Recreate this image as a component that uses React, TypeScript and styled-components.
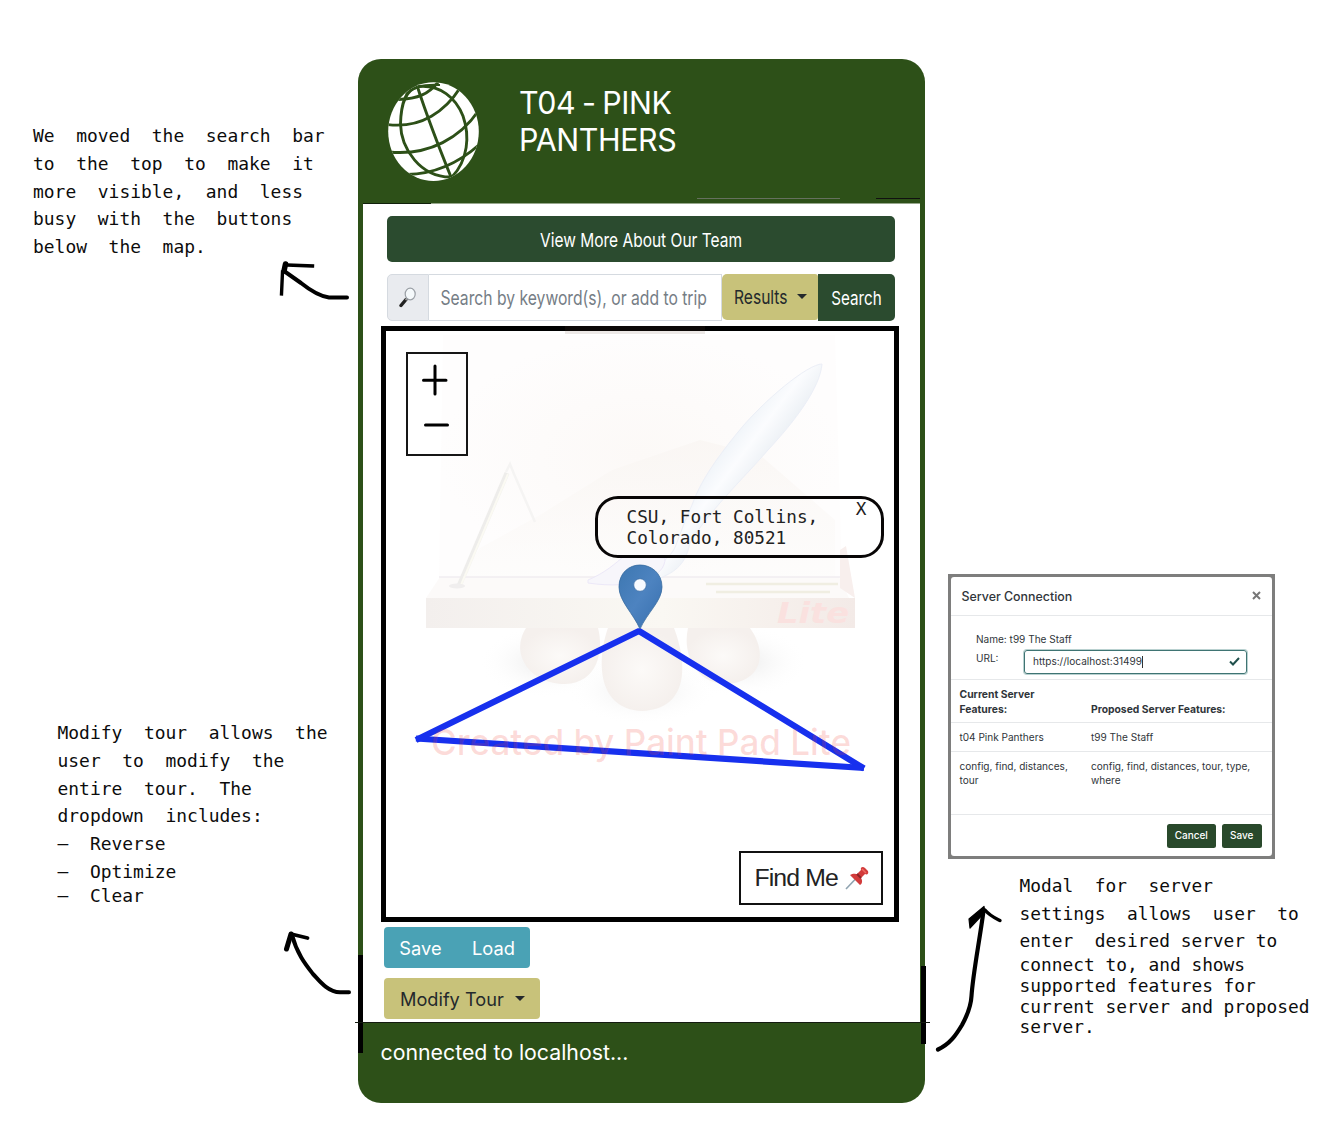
import React from "react";
import styled, { createGlobalStyle } from "styled-components";

const Global = createGlobalStyle`
  * { box-sizing: border-box; }
  body { margin: 0; background: #fff; font-family: Inter, "Liberation Sans", sans-serif; color: #212529; }
`;

const forest = "#2d5018";
const pine = "#2b4b2f";
const khaki = "#c8c27a";

const Page = styled.main`
  display: flex;
  align-items: flex-start;
  width: 1342px;
  height: 1140px;
  overflow: hidden;
`;

const Column = styled.section<{ $width: number; $top: number }>`
  flex: 0 0 ${(p) => p.$width}px;
  padding-top: ${(p) => p.$top}px;
`;

const Note = styled.div<{ $left: number; $top?: number; $size?: number }>`
  margin: ${(p) => p.$top ?? 0}px 0 0 ${(p) => p.$left}px;
  font-family: "DejaVu Sans Mono", monospace;
  font-size: ${(p) => p.$size ?? 17.95}px;
  color: #0c0c0c;
  white-space: pre;
`;

const Line = styled.div<{ $tight?: boolean }>`
  height: ${(p) => (p.$tight ? 20.8 : 27.7)}px;
  line-height: ${(p) => (p.$tight ? 20.8 : 27.7)}px;
`;

const Sketch = styled.svg<{ $left: number; $top: number }>`
  display: block;
  margin: ${(p) => p.$top}px 0 0 ${(p) => p.$left}px;
  fill: none;
  stroke: #000;
  stroke-linecap: round;
  stroke-linejoin: round;
`;

const Phone = styled.section`
  position: relative;
  flex: 0 0 567px;
  height: 1044px;
  margin-top: 59px;
  display: flex;
  flex-direction: column;
  background: ${forest};
  border-radius: 23px;
`;

const Header = styled.header`
  height: 144px;
  flex: none;
  display: flex;
  align-items: flex-start;
  padding: 22px 0 0 29px;
`;

const Globe = styled.svg`
  width: 93px;
  height: 101px;
`;

const Title = styled.h1`
  margin: 2.5px 0 0 39px;
  font-size: 31px;
  line-height: 37.5px;
  font-weight: 400;
  letter-spacing: -0.4px;
  word-spacing: -1.5px;
  color: #fff;
  transform-origin: left;
  transform: scaleX(0.98);
`;

const Screen = styled.div`
  height: 819px;
  flex: none;
  margin: 0 5px;
  padding: 13px 0 0 18px;
  background: #fff;
`;

const Tall = styled.span<{ $size: number }>`
  display: inline-block;
  white-space: nowrap;
  font-size: ${(p) => p.$size}px;
  transform: scaleY(1.24);
`;

const TeamButton = styled.button`
  display: block;
  width: 508px;
  height: 46px;
  margin: 0 0 12px 6px;
  padding: 0;
  border: 0;
  border-radius: 5px;
  background: ${pine};
  color: #fff;
  font: 400 16px/48px Inter, sans-serif;
`;

const SearchGroup = styled.div`
  display: flex;
  width: 508px;
  height: 47px;
  margin: 0 0 5px 6px;
`;

const Addon = styled.span`
  width: 42px;
  border: 1.5px solid #d5dae0;
  border-radius: 5px 0 0 5px;
  background: #e9ebef;
  display: flex;
  align-items: center;
  justify-content: center;
`;

const SearchField = styled.div`
  width: 293px;
  padding: 0 12px 0 11.5px;
  border: 1.5px solid #d5dae0;
  border-left: 0;
  background: #fff;
  color: #757d85;
  line-height: 46px;
`;

const Clip = styled.div`
  width: 269px;
  height: 44px;
  overflow: hidden;
`;

const ResultsButton = styled.button`
  width: 96px;
  height: 46px;
  padding: 1px 0 0 12px;
  border: 0;
  border-radius: 5px 3px 3px 5px;
  background: ${khaki};
  color: #24292c;
  display: flex;
  align-items: center;
  font: 400 16px/46px Inter, sans-serif;
`;

const SearchButton = styled.button`
  width: 77px;
  padding: 0;
  border: 0;
  border-radius: 0 5px 5px 0;
  background: ${pine};
  color: #fff;
  font: 400 16px/48px Inter, sans-serif;
`;

const Caret = styled.i<{ $left: number }>`
  margin: -2px 0 0 ${(p) => p.$left}px;
  border: 5px solid transparent;
  border-top: 5.5px solid currentColor;
  border-bottom: 0;
`;

const MapFrame = styled.div`
  position: relative;
  width: 518px;
  height: 596px;
  border: 5px solid #000;
`;

const MapArt = styled.svg`
  position: absolute;
  left: -5px;
  top: -17px;
  width: 518px;
  height: 612px;
`;

const ZoomBox = styled.div`
  position: absolute;
  left: 20px;
  top: 21px;
  width: 62px;
  height: 104px;
  border: 2px solid #161616;
`;

const Popup = styled.div`
  position: absolute;
  left: 209px;
  top: 165px;
  width: 289px;
  height: 62px;
  padding: 8px 0 0 28.5px;
  border: 3px solid #080606;
  border-radius: 23px;
  font: 17.7px/21px "DejaVu Sans Mono", monospace;
  color: #222;
  white-space: pre;
`;

const Close = styled.span`
  position: absolute;
  right: 14.5px;
  top: 0;
`;

const FindMe = styled.button`
  position: absolute;
  right: 11px;
  bottom: 12px;
  width: 144px;
  height: 54px;
  padding: 0 0 0 13.5px;
  border: 2px solid #111;
  background: #fff;
  display: flex;
  align-items: center;
  color: #222;
  font: 400 24.8px/50px "Liberation Sans", sans-serif;
  letter-spacing: -0.9px;
`;

const Pushpin = styled.svg`
  margin-left: 7px;
  width: 24px;
  height: 24px;
`;

const FileButtons = styled.div`
  display: flex;
  width: 146px;
  height: 41px;
  margin: 5px 0 10px 3px;
  border-radius: 4px;
  overflow: hidden;
`;

const FileButton = styled.button<{ $width: number }>`
  width: ${(p) => p.$width}px;
  padding: 0;
  border: 0;
  background: #4aa2b5;
  color: #fff;
  font: 400 18.3px/43px Inter, sans-serif;
`;

const TourButton = styled.button`
  width: 156px;
  height: 41px;
  margin-left: 3px;
  padding: 2px 0 0 16px;
  border: 0;
  border-radius: 4px;
  background: ${khaki};
  color: #24292c;
  display: flex;
  align-items: center;
  font: 400 18.2px/41px Inter, sans-serif;
`;

const Footer = styled.footer`
  flex: 1;
  padding: 14px 0 0 22.5px;
  color: #fff;
  font-size: 21.3px;
  line-height: 32px;
`;

const Mark = styled.i<{ $x: number; $y: number; $w: number; $h: number; $c?: string }>`
  position: absolute;
  left: ${(p) => p.$x}px;
  top: ${(p) => p.$y}px;
  width: ${(p) => p.$w}px;
  height: ${(p) => p.$h}px;
  background: ${(p) => p.$c ?? "#000"};
`;

const Modal = styled.div`
  width: 327px;
  height: 285px;
  margin-left: 23px;
  padding: 3px;
  background: #7e7e7d;
`;

const Sheet = styled.div`
  height: 279.5px;
  display: flex;
  flex-direction: column;
  background: #fff;
  border-radius: 3px;
  font-size: 10.05px;
  color: #30353a;
`;

const ModalHead = styled.div`
  height: 39px;
  flex: none;
  display: flex;
  justify-content: space-between;
  padding: 0 11px 0 10.5px;
  border-bottom: 1px solid #e6e8ea;
  font-size: 12.4px;
  font-weight: 500;
  line-height: 40px;
`;

const Cross = styled.svg`
  width: 9px;
  height: 9px;
  margin-top: 14px;
  stroke: #777;
  stroke-width: 2;
`;

const ModalForm = styled.div`
  height: 64px;
  flex: none;
  padding: 15px 0 0 25px;
  border-bottom: 1px solid #e6e8ea;
`;

const FormLine = styled.div`
  height: 20px;
  display: flex;
  line-height: 17px;
`;

const FieldLabel = styled.span`
  width: 48px;
  line-height: 15px;
`;

const UrlField = styled.div`
  width: 223px;
  height: 24px;
  margin-top: -1px;
  padding: 0 6px 0 8px;
  display: flex;
  align-items: center;
  justify-content: space-between;
  border: 1.5px solid #3f7473;
  border-radius: 3px;
  box-shadow: 0 0 0 1px #b9d1d0;
`;

const Cursor = styled.i`
  display: inline-block;
  width: 1px;
  height: 12px;
  margin-bottom: -3px;
  background: #333;
`;

const Row = styled.div<{ $h: number; $bold?: boolean }>`
  height: ${(p) => p.$h}px;
  flex: none;
  display: grid;
  grid-template-columns: 131.5px 1fr;
  align-items: ${(p) => (p.$bold ? "end" : "start")};
  padding: ${(p) => (p.$bold ? "0 0 5.5px 8.5px" : "7.5px 0 0 8.5px")};
  border-bottom: 1px solid #e6e8ea;
  font-size: ${(p) => (p.$bold ? 10.35 : 10.05)}px;
  font-weight: ${(p) => (p.$bold ? 700 : 400)};
  line-height: 14.3px;
  white-space: pre;
`;

const ModalFoot = styled.div`
  flex: 1;
  display: flex;
  justify-content: flex-end;
  gap: 6px;
  padding: 9.5px 10.5px 0 0;
`;

const SmallButton = styled.button<{ $width: number }>`
  width: ${(p) => p.$width}px;
  height: 23.5px;
  padding: 0;
  border: 0;
  border-radius: 2.5px;
  background: #29492b;
  color: #fff;
  font: 500 10px/23px Inter, sans-serif;
`;

function Lines({ items, tightFrom = 99 }: { items: string[]; tightFrom?: number }) {
  return (
    <>
      {items.map((t, i) => (
        <Line key={t} $tight={i >= tightFrom}>{t}</Line>
      ))}
    </>
  );
}

function GlobeIcon() {
  return (
    <Globe viewBox="387 81 93 101">
      <defs>
        <clipPath id="globe"><ellipse cx="433.5" cy="131.6" rx="45.3" ry="49.3" /></clipPath>
      </defs>
      <ellipse cx="433.5" cy="131.6" rx="45.3" ry="49.3" fill="#fff" />
      <g clipPath="url(#globe)" fill="none" stroke={forest} strokeWidth="2.9">
        <path d="M417.5 87C425 110 436 140 451 177" />
        <path d="M417.5 87C405 90 401 104 400.5 124C401 148 420 178 452 177" />
        <path d="M417.5 86.5C440 84 456 98 463 116C470 136 468 160 452 177" />
        <path d="M398 99.5C418 99 429 94 439 81" />
        <path d="M387 124.5C422 129 446 110 460 88" />
        <path d="M389 152C430 156 461 137 479 110" />
        <path d="M407 174.5C435 174 460 162 480 144" />
        <path d="M406 94C412 88 424 84 440 85" strokeWidth="2.2" />
      </g>
    </Globe>
  );
}

function MapDrawing() {
  return (
    <MapArt viewBox="381 314 518 612">
      <defs>
        <linearGradient id="board" x1="0" x2="1">
          <stop offset="0" stopColor="#f3efed" /><stop offset=".55" stopColor="#faf8f3" /><stop offset="1" stopColor="#f3eae7" />
        </linearGradient>
        <linearGradient id="brush" gradientUnits="userSpaceOnUse" x1="725" y1="440" x2="765" y2="470">
          <stop offset="0" stopColor="#eef3f8" /><stop offset=".45" stopColor="#fbfcfe" /><stop offset="1" stopColor="#e9eef3" />
        </linearGradient>
        <radialGradient id="foot"><stop offset="0" stopColor="#fcfaf8" /><stop offset="1" stopColor="#f5f0ed" /></radialGradient>
        <radialGradient id="shade"><stop offset="0" stopColor="#ececec" /><stop offset="1" stopColor="#fff" stopOpacity="0" /></radialGradient>
        <linearGradient id="pin" y1="0" y2="1" x1="0" x2="1">
          <stop offset="0" stopColor="#3d77b1" /><stop offset=".5" stopColor="#4d83c0" /><stop offset="1" stopColor="#376fae" />
        </linearGradient>
        <radialGradient id="paper"><stop offset="0" stopColor="#fcf9f7" /><stop offset="1" stopColor="#fefdfd" /></radialGradient>
        <linearGradient id="mound" x1="0" x2="0" y1="0" y2="1">
          <stop offset="0" stopColor="#f9f5f2" /><stop offset="1" stopColor="#fdfcfb" />
        </linearGradient>
      </defs>
      <path d="M443 335H835L842 577H439Z" fill="url(#paper)" />
      <path d="M565 326H705V334H565Z" fill="#6b4a38" opacity=".12" />
      <path d="M480 548 540 515 612 470 700 440 760 455 835 520V577H460Z" fill="url(#mound)" opacity=".7" />
      <path d="M440 577H839L849 598H426Z" fill="#fcfaf9" />
      <path d="M439 577H840" stroke="#f1edf0" strokeWidth="1.5" />
      <path d="M840 550 846 546 855 598 840 588Z" fill="#f8efed" />
      <ellipse cx="545" cy="662" rx="66" ry="36" fill="url(#shade)" />
      <ellipse cx="742" cy="662" rx="66" ry="36" fill="url(#shade)" />
      <ellipse cx="642" cy="690" rx="75" ry="35" fill="url(#shade)" />
      <path d="M526 628H598C604 650 598 683 565 684C531 684 509 655 526 628Z" fill="url(#foot)" />
      <path d="M688 628H750C768 653 762 682 726 684C696 684 682 654 688 628Z" fill="url(#foot)" />
      <path d="M608 628H674C687 662 690 709 642 711C594 709 598 655 608 628Z" fill="url(#foot)" />
      <path d="M426 598H855V628H426Z" fill="url(#board)" />
      <path d="M706 584H838M716 592H830" stroke="#f0eee2" strokeWidth="2.5" />
      <path d="M459 586 507 473" stroke="#eeedeb" strokeWidth="5" />
      <path d="M461 585 508 474" stroke="#fbfaf3" strokeWidth="2" />
      <path d="M506 472 510 464 514 474 535 522" fill="none" stroke="#f5f4f3" strokeWidth="2.5" />
      <ellipse cx="457" cy="586" rx="8" ry="2.5" fill="#f0eeee" />
      <path d="M822 364C808 364 764 400 738 432C716 459 700 482 692 505C685 520 681 532 676 545C670 562 644 575 625 582L655 580C678 572 686 562 690 543C708 512 742 480 768 450C795 421 820 388 822 364Z" fill="url(#brush)" stroke="#eceff7" />
      <path d="M588 580C605 573 616 563 624 556L665 558C666 577 635 590 588 583Z" fill="#f7f6fb" stroke="#ece8f8" />
      <text x="777" y="623" fontFamily="DejaVu Sans" fontStyle="italic" fontWeight="700" fontSize="28" fill="#fae1df" textLength="72" lengthAdjust="spacingAndGlyphs">Lite</text>
      <g stroke="#1730ee" strokeWidth="6.2" fill="none">
        <path d="M416 740 639 631 864 768.5" strokeLinejoin="bevel" />
        <path d="M416 738.5 864 768" />
      </g>
      <path d="M640 565C651 565 662 573 662 587C662 601 647 613 640 629C633 613 619 601 619 587C619 573 629 565 640 565Z" fill="url(#pin)" stroke="#376b9f" strokeWidth=".8" />
      <circle cx="640" cy="585" r="6.3" fill="#f7faff" stroke="#3c6fa7" strokeWidth=".8" />
      <text x="431" y="754.5" fontFamily="Inter" fontWeight="500" fontSize="35.5" fill="#f04438" fillOpacity=".19" textLength="420" lengthAdjust="spacingAndGlyphs">Created by Paint Pad Lite</text>
    </MapArt>
  );
}

export default function App() {
  return (
    <Page>
      <Global />
      <Column $width={358} $top={122.4}>
        <Note $left={33}>
          <Lines items={["We  moved  the  search  bar", "to  the  top  to  make  it", "more  visible,  and  less", "busy  with  the  buttons", "below  the  map."]} />
        </Note>
        <Sketch $left={274} $top={-4} width="80" height="46" viewBox="274 257 80 46">
          <path d="M347 297.5H329C318 296 306 287 301 283L284 271" strokeWidth="4" />
          <path d="M312.5 266 287 265M281.5 294 282.5 272" strokeWidth="3.4" strokeLinecap="square" />
          <path d="M284 271 285.5 264" strokeWidth="5.5" />
        </Sketch>
        <Note $left={57.5} $top={416.6}>
          <Lines tightFrom={6} items={["Modify  tour  allows  the", "user  to  modify  the", "entire  tour.  The", "dropdown  includes:", "–  Reverse", "–  Optimize", "–  Clear"]} />
        </Note>
        <Sketch $left={280} $top={20} width="76" height="72" viewBox="280 926 76 72">
          <path d="M349 992.3H340C327 992 318 979 313 974C306 965 297 954 292 935" strokeWidth="4" />
          <path d="M286.5 949 291 934" strokeWidth="5" />
          <path d="M291 934 307.5 938" strokeWidth="3.8" />
        </Sketch>
      </Column>

      <Phone>
        <Header>
          <GlobeIcon />
          <Title>T04 - PINK<br />PANTHERS</Title>
        </Header>
        <Screen>
          <TeamButton><Tall $size={15.5}>View More About Our Team</Tall></TeamButton>
          <SearchGroup>
            <Addon>
              <svg width="18" height="21" viewBox="0 0 18 21">
                <path d="M2 18.5 7 12.5" stroke="#222" strokeWidth="3.4" strokeLinecap="round" />
                <path d="M6.5 13 8.5 11" stroke="#999" strokeWidth="2" />
                <ellipse cx="11.2" cy="7" rx="5" ry="5.8" fill="#f5f9fb" stroke="#9a9fa5" strokeWidth="1.2" />
              </svg>
            </Addon>
            <SearchField><Clip><Tall $size={15.7}>Search by keyword(s), or add to trip v</Tall></Clip></SearchField>
            <ResultsButton><Tall $size={15.6}>Results</Tall><Caret $left={9} /></ResultsButton>
            <SearchButton><Tall $size={15.2}>Search</Tall></SearchButton>
          </SearchGroup>
          <MapFrame>
            <MapDrawing />
            <ZoomBox>
              <svg width="58" height="100" viewBox="408 354 58 100" stroke="#000" strokeWidth="3" strokeLinecap="round">
                <path d="M423.5 380.3H446M435 366V394M425.5 425H447.5" />
              </svg>
            </ZoomBox>
            <Popup>{"CSU, Fort Collins,\nColorado, 80521"}<Close>X</Close></Popup>
            <FindMe>
              Find Me
              <Pushpin viewBox="0 0 24 24">
                <path d="M1 23 10 13.5" stroke="#8fa3b0" strokeWidth="1.6" />
                <path d="M5 9C8 7 11 8 12 8L16 4C15 1 18 0 20 2L23 5C24 8 22 9 20 8L16 12C18 15 17 18 15 19Z" fill="#d23b3b" />
                <path d="M12 8 16 12" stroke="#8e2327" strokeWidth="2" />
                <path d="M17 3 21 7" stroke="#ee6a62" strokeWidth="1.5" />
              </Pushpin>
            </FindMe>
          </MapFrame>
          <FileButtons>
            <FileButton $width={73}>Save</FileButton>
            <FileButton $width={73}>Load</FileButton>
          </FileButtons>
          <TourButton>Modify Tour<Caret $left={11} /></TourButton>
        </Screen>
        <Footer>connected to localhost...</Footer>
        <Mark $x={5} $y={144} $w={68} $h={1} $c="#10200a" />
        <Mark $x={73} $y={144} $w={489} $h={1} $c="#97a78c" />
        <Mark $x={339} $y={139} $w={143} $h={1} $c="#66705f" />
        <Mark $x={518} $y={139} $w={44} $h={1} $c="#111" />
        <Mark $x={0} $y={896} $w={5} $h={98} />
        <Mark $x={562.5} $y={907} $w={5} $h={78} />
        <Mark $x={-3} $y={963} $w={575} $h={1} $c="#141a10" />
      </Phone>

      <Column $width={417} $top={573.5}>
        <Modal>
          <Sheet>
            <ModalHead>
              Server Connection
              <Cross viewBox="0 0 9 9"><path d="M1 1 8 8M8 1 1 8" /></Cross>
            </ModalHead>
            <ModalForm>
              <FormLine>Name: t99 The Staff</FormLine>
              <FormLine>
                <FieldLabel>URL:</FieldLabel>
                <UrlField>
                  <span>https://localhost:31499<Cursor /></span>
                  <svg width="11" height="9" viewBox="0 0 11 9" fill="none" stroke="#20504c" strokeWidth="2"><path d="M1 4.5 4 7.5 10 1" /></svg>
                </UrlField>
              </FormLine>
            </ModalForm>
            <Row $h={43} $bold><span>{"Current Server\nFeatures:"}</span><span>Proposed Server Features:</span></Row>
            <Row $h={29}><span>t04 Pink Panthers</span><span>t99 The Staff</span></Row>
            <Row $h={63}><span>{"config, find, distances,\ntour"}</span><span>{"config, find, distances, tour, type,\nwhere"}</span></Row>
            <ModalFoot>
              <SmallButton $width={49.5}>Cancel</SmallButton>
              <SmallButton $width={39.5}>Save</SmallButton>
            </ModalFoot>
          </Sheet>
        </Modal>
        <Note $left={94.5} $top={13.4} $size={17.85}>
          <Lines tightFrom={3} items={["Modal  for  server", "settings  allows  user  to", "enter  desired server to", "connect to, and shows", "supported features for", "current server and proposed", "server."]} />
        </Note>
        <Sketch $left={5} $top={-138} width="80" height="155" viewBox="930 901 80 155">
          <path d="M938 1050.5C950 1045 956 1036 962 1026C968 1015 971 1007 971.5 997C973 975 979 945 983.5 912" strokeWidth="4.2" />
          <path d="M969 920 984 907.5 985 913 970 929Z" fill="#000" strokeWidth="1.2" />
          <path d="M985 911C990 917 995 919 1000 921.5" strokeWidth="3.4" />
        </Sketch>
      </Column>
    </Page>
  );
}
